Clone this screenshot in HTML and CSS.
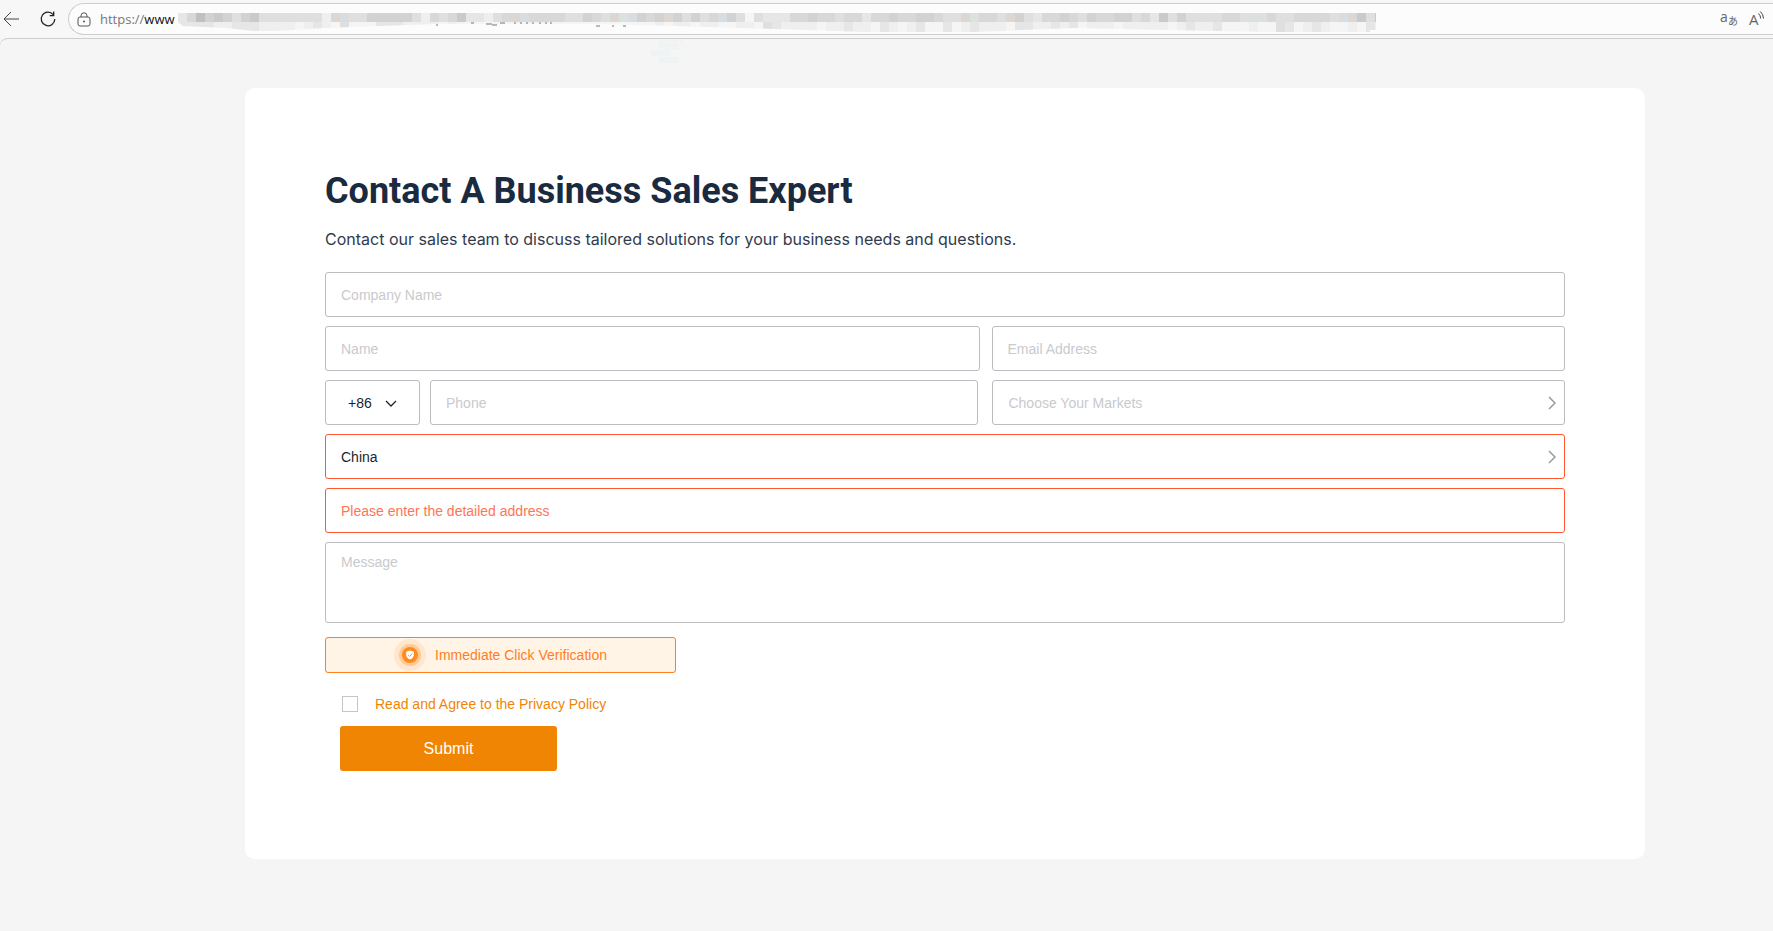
FILE: index.html
```html
<!DOCTYPE html>
<html lang="en">
<head>
    <meta charset="UTF-8">
    <meta name="viewport" content="width=device-width, initial-scale=1.0">
    <title>Contact A Business Sales Expert</title>
    <link rel="stylesheet" href="styles.css">
</head>

<body>
    <header class="toolbar">
        <button class="tool-btn" type="button" aria-label="Back">
            <svg width="17" height="16" viewBox="0 0 17 16"><path d="M16 8H1M8 1L1 8l7 7" /></svg>
        </button>
        <button class="tool-btn reload" type="button" aria-label="Reload">
            <svg width="16" height="16" viewBox="0 0 16 16"><path d="M13.2 3.6A6.8 6.8 0 1 0 14.8 8M13.7 0.6v4h-4" /></svg>
        </button>
        <div class="address-bar">
            <svg class="lock" width="14" height="15" viewBox="0 0 14 15">
                <rect x="1" y="5" width="12" height="9" rx="2" />
                <path d="M4 5V3.8a3 3 0 0 1 6 0V5" />
                <circle cx="7" cy="9.500" r="1" />
            </svg>
            <span class="url">https://<b>www</b></span>
            <svg class="url-mask" id="url-mask" height="28" aria-hidden="true">
                <clipPath id="mask-edge">
                    <path d="M0 8H1201V25H1195V27H1100L990 25L900 23L800 27H690L600 24L500 21L420 19H260L150 23L100 26H80L50 23L8 21L0 15Z" />
                </clipPath>
                <g id="mask-cells" clip-path="url(#mask-edge)"></g>
                <path class="url-bits" d="M261 20h2M296 18h3M311 19h6M317 20h5M325 18h5M339 18h2M345 18h2M351 18h2M357 18h2M364 18h2M370 18h2M375 18h2M421 21h4M437 21h2M448 21h3" />
            </svg>
            <button class="tool-btn" type="button" aria-label="Translate">
                <svg width="18" height="18" viewBox="0 0 18 18">
                    <text class="glyph-a" x="0" y="12">a</text>
                    <text class="glyph-kana" x="8" y="15">あ</text>
                </svg>
            </button>
            <button class="tool-btn" type="button" aria-label="Read aloud">
                <svg width="18" height="18" viewBox="0 0 18 18">
                    <text class="glyph-read" x="1" y="15">A</text>
                    <path d="M10.500 3.500q2 1.800 2.200 5M12.300 1.500q3 2.500 3.200 7" />
                </svg>
            </button>
        </div>
    </header>

    <main class="page">
        <svg class="smudge" width="36" height="26" viewBox="0 0 36 26" aria-hidden="true">
            <path d="M8 1h24v2H8zM8 4h20v6H8zM0 11h20v6H0zM8 18h20v6H8z" />
        </svg>

        <section class="card">
            <h1>Contact A Business Sales Expert</h1>
            <p class="intro">Contact our sales team to discuss tailored solutions for your business needs and questions.</p>

            <form class="contact-form" onsubmit="return false">
                <input class="field" type="text" placeholder="Company Name" aria-label="Company Name">

                <div class="row">
                    <input class="field" type="text" placeholder="Name" aria-label="Name">
                    <input class="field" type="email" placeholder="Email Address" aria-label="Email Address">
                </div>

                <div class="row row-phone">
                    <div class="phone-group">
                        <div class="select-wrap code">
                            <select class="field" aria-label="Country code">
                                <option>+86</option>
                            </select>
                            <svg width="12" height="8" viewBox="0 0 12 8"><path d="M1 1l5 5 5-5" /></svg>
                        </div>
                        <input class="field" type="tel" placeholder="Phone" aria-label="Phone">
                    </div>
                    <div class="select-wrap">
                        <select class="field empty" aria-label="Choose Your Markets">
                            <option>Choose Your Markets</option>
                        </select>
                        <svg width="8" height="14" viewBox="0 0 8 14"><path d="M1 1l6 6-6 6" /></svg>
                    </div>
                </div>

                <div class="select-wrap">
                    <select class="field error" aria-label="Country">
                        <option>China</option>
                    </select>
                    <svg width="8" height="14" viewBox="0 0 8 14"><path d="M1 1l6 6-6 6" /></svg>
                </div>

                <input class="field error" type="text" placeholder="Please enter the detailed address" aria-label="Detailed address">
                <textarea class="field message" placeholder="Message" aria-label="Message"></textarea>

                <button class="verify" type="button">
                    <svg width="32" height="32" viewBox="0 0 32 32">
                        <circle cx="16" cy="16" r="16" fill="#ffe6cc" />
                        <circle cx="16" cy="16" r="11" fill="#ffca98" />
                        <circle cx="16" cy="16" r="8" fill="#ff8a1e" />
                        <path d="M16 11.500l3.800 1.200v3.600c0 2-1.600 3.300-3.800 4.200-2.200-.9-3.800-2.200-3.800-4.200v-3.600z" fill="#fff" />
                        <path d="M14.200 16l1.400 1.400 2.600-2.700" fill="none" stroke="#ff8a1e" />
                    </svg>
                    Immediate Click Verification
                </button>

                <div class="agree">
                    <input type="checkbox" id="agree">
                    <label for="agree">Read and Agree to the Privacy Policy</label>
                </div>

                <button class="submit" type="submit">Submit</button>
            </form>
        </section>
    </main>

    <script>
        // hides the rest of the url behind grey blocks, one letter per block
        const shades = {
            a: '#c0c0c0', b: '#cacacb', c: '#d2d2d2', d: '#d8d8d8', e: '#dfdfdf', f: '#e6e6e6',
            g: '#efefef', h: '#f5f5f5', p: '#ddd7d4', q: '#d8dde2', t: '#dbe1df'
        };
        const rows = [
            'fdacbcecbeeeeeeegpqeecccccegdedbffgedpqddddeecdeptqcdcpcecepqcehefffddcddeddfddcddccdeeptddepcefddcdecddccedfbeceeeeddetedeeddddeqpbebde',
            'ffffggfffgggghgfghehhhfffgggghghhhhhhhhhhhhhhhhhhhhhhghgghgghhgghefgggghggfgghfghgfhhfhgfggghffggfgfhggghggggghgfggfhhhghhefhgfghhghfghf'
        ];
        const size = 9;
        const cells = document.getElementById('mask-cells');

        rows.forEach((row, y) => {
            [...row].forEach((shade, x) => {
                const rect = document.createElementNS('http://www.w3.org/2000/svg', 'rect');
                rect.setAttribute('x', x * size + 3);
                rect.setAttribute('y', y * size + 8);
                rect.setAttribute('width', size);
                rect.setAttribute('height', y ? size + 1 : size);
                rect.setAttribute('fill', shades[shade]);
                cells.appendChild(rect);
            });
        });
    </script>
</body>
</html>
```
FILE: styles.css
```css
* {
    margin: 0;
    padding: 0;
    box-sizing: border-box;
}

body {
    font-family: "Liberation Sans", Arial, sans-serif;
    font-size: 14px;
    background: #f5f5f5;
    color: #1a2b3f;
    min-height: 100vh;
}

button {
    font: inherit;
    cursor: pointer;
}

/* browser bar */
.toolbar {
    display: flex;
    align-items: center;
    height: 38px;
    padding-left: 3px;
    background: #f7f7f7;
}

.tool-btn {
    display: flex;
    border: none;
    background: none;
}

.tool-btn svg {
    overflow: visible;
}

.tool-btn path {
    fill: none;
    stroke: #444;
    stroke-width: 1;
}

.reload {
    margin: 0 12px 0 20px;
}

.reload path {
    stroke: #222;
    stroke-width: 1.3;
}

.address-bar {
    flex: 1;
    min-width: 0;
    display: flex;
    align-items: center;
    height: 32px;
    padding: 0 7px 0 8px;
    background: #fcfcfc;
    border: 1px solid #cdcdcd;
    border-right: none;
    border-radius: 16px 0 0 16px;
}

.address-bar .tool-btn {
    margin-left: 10px;
}

.lock {
    flex: none;
    margin-right: 9px;
    fill: none;
    stroke: #555;
}

.lock circle {
    fill: #555;
    stroke: none;
}

.url {
    flex: none;
    font-family: "Open Sans", "Noto Sans", sans-serif;
    font-size: 13px;
    line-height: 18px;
    color: #777;
}

.url b {
    font-weight: 400;
    color: #111;
}

.url-mask {
    flex: 1;
    min-width: 0;
    overflow: hidden;
}

.url-bits {
    stroke: #777;
}

.glyph-a,
.glyph-kana,
.glyph-read {
    font-family: "Open Sans", "Noto Sans CJK JP", sans-serif;
    fill: #666;
}

.glyph-a {
    font-size: 14px;
}

.glyph-kana {
    font-size: 10px;
}

.glyph-read {
    font-size: 15px;
}

/* page */
.page {
    position: relative;
    padding: 49px 128px 72px 245px;
    border-top: 1px solid #cdcdcd;
    border-top-left-radius: 8px;
}

.smudge {
    position: absolute;
    top: 0;
    left: 651px;
    fill: #f0f3f3;
}

.card {
    padding: 80px 80px 88px;
    background: #fff;
    border-radius: 10px;
}

h1 {
    font-family: Roboto, sans-serif;
    font-size: 36px;
    font-weight: 700;
    line-height: 46px;
}

.intro {
    margin: 13px 0 21px;
    font-family: Inter, sans-serif;
    font-size: 16px;
    line-height: 24px;
    color: #2f3b4d;
}

/* form */
.contact-form {
    display: flex;
    flex-direction: column;
    gap: 9px;
}

.field {
    display: block;
    width: 100%;
    height: 45px;
    padding: 0 15px;
    font: inherit;
    color: #1a1f2e;
    background: #fff;
    border: 1px solid #bbbcc0;
    border-radius: 3px;
    outline: none;
    appearance: none;
}

.field::placeholder,
.field.empty {
    color: #c9cacd;
    opacity: 1;
}

.field.error {
    border-color: #ff5630;
}

.field.error::placeholder {
    color: #ff7455;
}

.row {
    display: grid;
    grid-template-columns: 654fr 573fr;
    gap: 12px;
}

.row-phone {
    gap: 14px;
}

.phone-group {
    display: flex;
    gap: 10px;
}

.select-wrap {
    position: relative;
}

.select-wrap svg {
    position: absolute;
    top: 16px;
    right: 9px;
    fill: none;
    stroke: #999;
    stroke-width: 1.5;
    pointer-events: none;
}

.code {
    flex: none;
    width: 95px;
}

.code .field {
    padding: 0 22px;
}

.code svg {
    top: 20px;
    right: 23px;
    stroke: #222;
    stroke-width: 1.3;
}

.message {
    height: 81px;
    padding: 11px 15px;
    resize: none;
}

.verify {
    display: flex;
    justify-content: center;
    align-items: center;
    gap: 9px;
    width: 351px;
    height: 36px;
    margin-top: 5px;
    color: #ff7e1f;
    background: #fff4e6;
    border: 1px solid #ff7e1f;
    border-radius: 3px;
}

.agree {
    display: flex;
    align-items: center;
    gap: 17px;
    margin: 14px 0 5px 17px;
}

.agree input {
    width: 16px;
    height: 16px;
    background: #fff;
    border: 1px solid #c4c5c9;
    appearance: none;
}

.agree input:checked {
    background: #f08504;
}

.agree label {
    color: #f08504;
}

.submit {
    width: 217px;
    height: 45px;
    margin-left: 15px;
    font-size: 16px;
    color: #fff;
    background: #f08504;
    border: none;
    border-radius: 3px;
}

@media (max-width: 1100px) {
    .page {
        padding: 24px;
    }

    .card {
        padding: 40px 24px;
    }
}
```
